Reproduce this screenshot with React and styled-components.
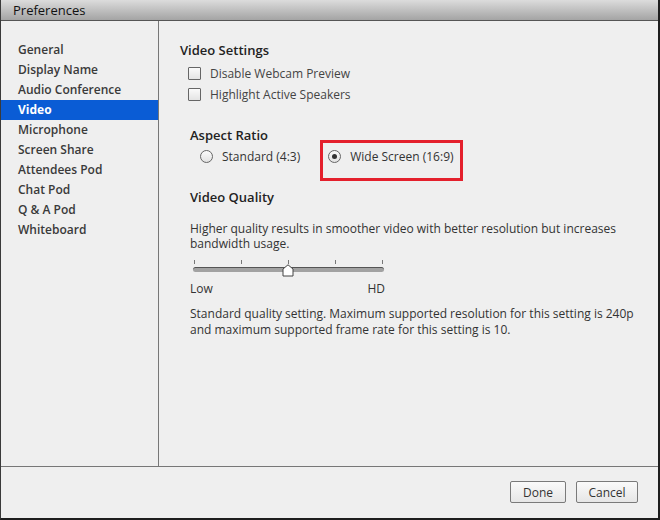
import React from "react";
import styled, { createGlobalStyle } from "styled-components";

const Global = createGlobalStyle`
  html, body { margin: 0; padding: 0; background: #efefef; }
  body { font-family: "Open Sans", "Noto Sans", sans-serif; }
`;

const Window = styled.div`
  width: 660px;
  height: 520px;
  box-sizing: border-box;
  display: flex;
  flex-direction: column;
  background: #efefef;
  border-left: 1px solid #3a3a3a;
  border-right: 2px solid #1e1e1e;
  border-bottom: 2px solid #1e1e1e;
  color: #333;
`;

const TitleBar = styled.div`
  height: 21px;
  flex: none;
  box-sizing: border-box;
  border-bottom: 1px solid #555;
  background: linear-gradient(#dcdcdc, #a4a4a4);
  padding-left: 12px;
  font-size: 13px;
  line-height: 20px;
  font-weight: 500;
  color: #111;
`;

const Main = styled.div`
  display: flex;
  height: 445px;
  flex: none;
  border-bottom: 1px solid #777;
`;

const Sidebar = styled.ul`
  list-style: none;
  margin: 0;
  padding: 19px 0 0 0;
  width: 158px;
  flex: none;
  box-sizing: border-box;
  border-right: 1px solid #777;
`;

const NavItem = styled.li`
  height: 20px;
  line-height: 20px;
  padding-left: 17px;
  font-size: 12px;
  font-weight: ${(p) => (p.$active ? 700 : 600)};
  color: ${(p) => (p.$active ? "#fff" : "#3a3a3a")};
  background: ${(p) => (p.$active ? "#0a5cd5" : "transparent")};
`;

const Content = styled.div`
  flex: 1;
  padding: 19px 0 0 21px;
  display: flex;
  flex-direction: column;
`;

const Heading = styled.div`
  font-size: 13px;
  font-weight: 600;
  color: #222;
  line-height: 20px;
  margin-left: ${(p) => p.$indent || 0}px;
  margin-top: ${(p) => p.$top || 0}px;
`;

const CheckList = styled.div`
  margin-top: 3px;
  display: flex;
  flex-direction: column;
`;

const CheckRow = styled.label`
  display: flex;
  align-items: center;
  gap: 9px;
  height: 21px;
  margin-left: 8px;
  font-size: 12px;
  color: #444;
`;

const Box = styled.span`
  width: 11px;
  height: 11px;
  border: 1px solid #666;
  border-radius: 1px;
  background: linear-gradient(#fafafa, #e4e4e4);
`;

const RadioGroup = styled.div`
  display: flex;
  align-items: flex-start;
  margin-top: -5px;
  margin-left: 20px;
`;

const RadioRow = styled.label`
  display: flex;
  align-items: center;
  gap: 9px;
  font-size: 12px;
  color: #333;
  height: 20px;
  margin-top: ${(p) => p.$top || 0}px;
`;

const Highlight = styled.div`
  margin-left: ${(p) => p.$gap}px;
  width: 143px;
  height: 41px;
  box-sizing: border-box;
  border: 3px solid #e4202c;
  padding: 3px 0 0 5px;
`;

const Circle = styled.span`
  width: 11px;
  height: 11px;
  border: 1px solid #666;
  border-radius: 50%;
  background: linear-gradient(#fbfbfb, #e2e2e2);
  display: flex;
  align-items: center;
  justify-content: center;
  &::after {
    content: "";
    display: ${(p) => (p.$on ? "block" : "none")};
    width: 5px;
    height: 5px;
    border-radius: 50%;
    background: #333;
  }
`;

const Para = styled.p`
  margin: ${(p) => p.$top}px 0 0 10px;
  font-size: 12px;
  line-height: ${(p) => p.$lh}px;
  color: #333;
  width: 445px;
`;

const SliderWrap = styled.div`
  margin: 9px 0 0 13px;
  width: 191px;
`;

const Ticks = styled.div`
  display: flex;
  justify-content: space-between;
  padding: 0 1px;
  height: 5px;
`;

const Tick = styled.span`
  width: 1px;
  height: 4px;
  background: #777;
`;

const Track = styled.div`
  position: relative;
  margin-top: 2px;
  height: 5px;
  border-radius: 3px;
  background: #a2a2a2;
  border-top: 1px solid #555;
  box-sizing: border-box;
`;

const Thumb = styled.svg`
  position: absolute;
  top: -4px;
  left: 89px;
`;

const Scale = styled.div`
  display: flex;
  justify-content: space-between;
  width: 195px;
  margin: 9px 0 0 10px;
  font-size: 12px;
  color: #333;
  line-height: 16px;
`;

const Footer = styled.div`
  flex: 1;
  display: flex;
  justify-content: flex-end;
  align-items: flex-start;
  gap: 10px;
  padding: 14px 20px 0 0;
`;

const Button = styled.button`
  width: ${(p) => p.$w}px;
  height: 22px;
  border: 1px solid #7a7a7a;
  border-radius: 2px;
  background: linear-gradient(#fafafa, #e6e6e6);
  font-family: "Open Sans", "Noto Sans", sans-serif;
  font-size: 12px;
  color: #333;
  padding: 0;
`;

const nav = [
  "General",
  "Display Name",
  "Audio Conference",
  "Video",
  "Microphone",
  "Screen Share",
  "Attendees Pod",
  "Chat Pod",
  "Q & A Pod",
  "Whiteboard",
];

export default function App() {
  return (
    <>
      <Global />
      <Window>
        <TitleBar>Preferences</TitleBar>
        <Main>
          <Sidebar>
            {nav.map((n) => (
              <NavItem key={n} $active={n === "Video"}>
                {n}
              </NavItem>
            ))}
          </Sidebar>
          <Content>
            <Heading>Video Settings</Heading>
            <CheckList>
              <CheckRow>
                <Box />
                Disable Webcam Preview
              </CheckRow>
              <CheckRow>
                <Box />
                Highlight Active Speakers
              </CheckRow>
            </CheckList>
            <Heading $indent={10} $top={20}>
              Aspect Ratio
            </Heading>
            <RadioGroup>
              <RadioRow $top={6}>
                <Circle />
                Standard (4:3)
              </RadioRow>
              <Highlight $gap={20}>
                <RadioRow>
                  <Circle $on />
                  Wide Screen (16:9)
                </RadioRow>
              </Highlight>
            </RadioGroup>
            <Heading $indent={10} $top={6}>
              Video Quality
            </Heading>
            <Para $top={14} $lh={15}>
              Higher quality results in smoother video with better resolution but increases bandwidth usage.
            </Para>
            <SliderWrap>
              <Ticks>
                {[0, 1, 2, 3, 4].map((i) => (
                  <Tick key={i} />
                ))}
              </Ticks>
              <Track>
                <Thumb width="12" height="13" viewBox="0 0 12 13">
                  <path d="M1 5 L6 0.8 L11 5 L11 12 L1 12 Z" fill="#fff" stroke="#444" strokeWidth="1" />
                </Thumb>
              </Track>
            </SliderWrap>
            <Scale>
              <span>Low</span>
              <span>HD</span>
            </Scale>
            <Para $top={9} $lh={16}>
              Standard quality setting. Maximum supported resolution for this setting is 240p and maximum supported frame rate for this setting is 10.
            </Para>
          </Content>
        </Main>
        <Footer>
          <Button $w={56}>Done</Button>
          <Button $w={62}>Cancel</Button>
        </Footer>
      </Window>
    </>
  );
}
